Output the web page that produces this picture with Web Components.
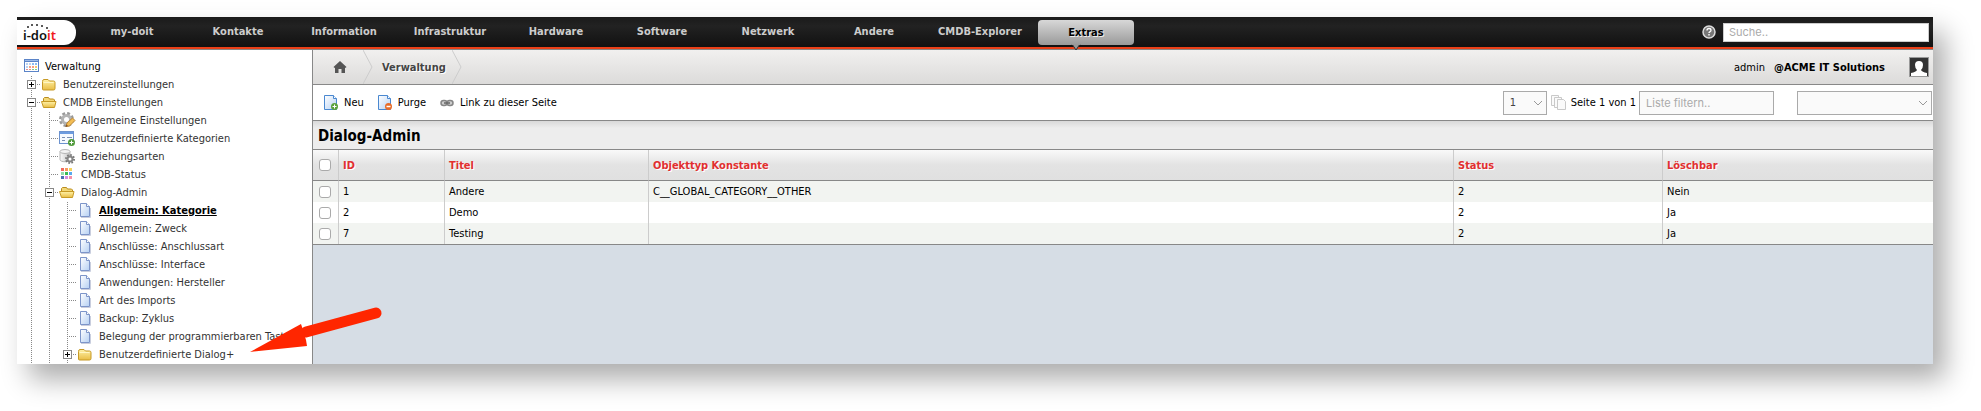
<!DOCTYPE html>
<html lang="de">
<head>
<meta charset="utf-8">
<title>i-doit – Dialog-Admin</title>
<style>
  body { margin: 0; padding: 17px 48px 47px 17px; background: #fff; color: #000;
    font: 11px/18px "DejaVu Sans Condensed", "DejaVu Sans", sans-serif; }
</style>
</head>
<body>
<app-shell>
  <top-bar slot="top">
    <nav-item>my-doit</nav-item>
    <nav-item>Kontakte</nav-item>
    <nav-item>Information</nav-item>
    <nav-item>Infrastruktur</nav-item>
    <nav-item>Hardware</nav-item>
    <nav-item>Software</nav-item>
    <nav-item>Netzwerk</nav-item>
    <nav-item>Andere</nav-item>
    <nav-item>CMDB-Explorer</nav-item>
    <nav-item active>Extras</nav-item>
  </top-bar>
  <tree-view slot="side">
    <tree-item level="0" icon="root">Verwaltung</tree-item>
    <tree-item level="1" icon="folder" toggle="plus">Benutzereinstellungen</tree-item>
    <tree-item level="1" icon="folder-open" toggle="minus">CMDB Einstellungen</tree-item>
    <tree-item level="2" icon="gear">Allgemeine Einstellungen</tree-item>
    <tree-item level="2" icon="form">Benutzerdefinierte Kategorien</tree-item>
    <tree-item level="2" icon="database">Beziehungsarten</tree-item>
    <tree-item level="2" icon="colors">CMDB-Status</tree-item>
    <tree-item level="2" icon="folder-open" toggle="minus">Dialog-Admin</tree-item>
    <tree-item level="3" icon="page" selected>Allgemein: Kategorie</tree-item>
    <tree-item level="3" icon="page">Allgemein: Zweck</tree-item>
    <tree-item level="3" icon="page">Anschlüsse: Anschlussart</tree-item>
    <tree-item level="3" icon="page">Anschlüsse: Interface</tree-item>
    <tree-item level="3" icon="page">Anwendungen: Hersteller</tree-item>
    <tree-item level="3" icon="page">Art des Imports</tree-item>
    <tree-item level="3" icon="page">Backup: Zyklus</tree-item>
    <tree-item level="3" icon="page">Belegung der programmierbaren Tasten</tree-item>
    <tree-item level="3" icon="folder" toggle="plus">Benutzerdefinierte Dialog+</tree-item>
  </tree-view>
  <crumb-bar>
    <span slot="trail">Verwaltung</span>
    <span slot="user">admin</span>
    <b slot="tenant">@ACME IT Solutions</b>
  </crumb-bar>
  <tool-bar></tool-bar>
  <list-title>Dialog-Admin</list-title>
  <data-list></data-list>
  <pointer-arrow slot="overlay"></pointer-arrow>
</app-shell>

<script>
const ICONS = {
  root: `<rect x="2" y="1" width="15" height="13" fill="#5b84c8"/><rect x="3" y="4" width="13" height="9" fill="#fff"/><path d="M3 2h13v1H3z" fill="#9dbbe8"/>
    <g fill="#bcd3f2"><path d="M4 5h2v2H4zM7 5h2v2H7zM4 8h2v2H4z"/></g><path d="M10 5h2v2h-2zM13 5h2v2h-2z" fill="#8cbcf0"/><path d="M7 8h2v2H7zM10 8h2v2h-2z" fill="#f6a183"/><path d="M13 8h2v2h-2z" fill="#f7c96a"/><path d="M4 11h2v1H4zM7 11h2v1H7z" fill="#e58c8c"/><path d="M10 11h2v1h-2zM13 11h2v1h-2z" fill="#7fce8f"/>`,
  folder: `<path d="M2.500 5.500q0-2 1.500-2h4l1.500 1.500h4q1.500 0 1.500 1.500v6q0 1.500-1.500 1.500h-10q-1 0-1-1z" fill="url(#y)" stroke="#c79a26"/><path d="M3.500 6.500h10" stroke="#fff6c4"/>`,
  "folder-open": `<path d="M3.500 12V4.500l1-1h4l1 1.500h4l1 1V8" fill="#f3d877" stroke="#b98c1f"/><path d="M1.500 7.500h14.500l-1.500 6h-11z" fill="url(#y)" stroke="#c79a26"/>`,
  page: `<path d="M4.500 1.500h6l3 3v10h-9z" fill="url(#b)" stroke="#7d95c9"/><path d="M10.500 1.500v3h3" fill="#fff" stroke="#7d95c9"/><path d="M5 15.500h9.500V6" fill="none" stroke="#c9cede"/>`,
  gear: `<circle cx="8.500" cy="7.500" r="6" fill="none" stroke="#999" stroke-width="3" stroke-dasharray="2.700 2"/><circle cx="8.500" cy="7.500" r="4" fill="#fff" stroke="#b4b4b4" stroke-width="3"/><path d="M8 14.500l1-3.500 5.500-5 2.500 2.500-5.500 5.500z" fill="#f3bd54" stroke="#b98535"/><path d="M7.500 15l1-2.500 1.500 1.500z" fill="#7b4b28"/>`,
  form: `<rect x="1.500" y="1.500" width="14" height="12" fill="#f6faff" stroke="#6c93cf"/><path d="M2 2h13v2H2z" fill="#6d9ce0"/><path d="M4 7.500h3M4 10.500h3M9 7.500h5" stroke="#7a8fb3"/><circle cx="13.500" cy="12.500" r="3.500" fill="#4f9a3a"/><path d="M11.500 12.500h4M13.500 10.500v4" stroke="#fff"/>`,
  database: `<path d="M2 3.500v8c0 3 10 3 10 0v-8" fill="url(#g)" stroke="#b5b5b5"/><ellipse cx="7" cy="3.500" rx="5" ry="2" fill="#f4f4f4" stroke="#b5b5b5"/><circle cx="12" cy="11" r="4" fill="none" stroke="#777" stroke-width="2" stroke-dasharray="1.600 1.500"/><circle cx="12" cy="11" r="2.500" fill="#fff" stroke="#858585" stroke-width="2"/>`,
  colors: `<path d="M3 2h3v3H3z" fill="#f26b5e"/><path d="M7 2h3v3H7z" fill="#f79b61"/><path d="M11 2h3v3h-3z" fill="#f4d35e"/><path d="M3 6h3v3H3z" fill="#98dcae"/><path d="M7 6h3v3H7z" fill="#3dbb54"/><path d="M11 6h3v3h-3z" fill="#57a8ee"/><path d="M3 10h3v3H3z" fill="#4b6fb3"/><path d="M7 10h3v3H7z" fill="#d78be0"/><path d="M11 10h3v3h-3z" fill="#f490a8"/>`,
  add: `<path d="M1.500 1.500h9l3 3v11h-12z" fill="url(#b)" stroke="#4a88d0"/><path d="M10.500 1.500v3h3" fill="#fff" stroke="#4a88d0"/><circle cx="11.500" cy="12.500" r="3.500" fill="#5aa13c"/><path d="M9.500 12.500h4M11.500 10.500v4" stroke="#fff"/>`,
  purge: `<path d="M1.500 1.500h9l3 3v11h-12z" fill="url(#b)" stroke="#4a88d0"/><path d="M10.500 1.500v3h3" fill="#fff" stroke="#4a88d0"/><circle cx="11.500" cy="12.500" r="3.500" fill="#e86a26"/><path d="M9.500 12.500h4" stroke="#fff" stroke-width="1.500"/>`,
  link: `<g fill="#ccc" stroke="#858585" stroke-width="1.500"><rect x="2" y="6.500" width="6" height="5" rx="2.500"/><rect x="8" y="6.500" width="6" height="5" rx="2.500"/></g><path d="M5 9h6" stroke="#666" stroke-width="1.500"/>`,
  copy: `<g fill="#fafafa" stroke="#c9c9c9"><path d="M1.500 1.500h7v10h-7z"/><path d="M4.500 3.500h7v10h-7z"/><path d="M7.500 5.500h6l2 2v8h-8z"/></g>`,
  home: `<path d="M9 3l6.500 6-1 1L14 9.500V15h-3.500v-4h-3v4H4V9.500L3.500 10l-1-1z" fill="#555"/>`,
  help: `<circle cx="9" cy="9" r="6" fill="#777" stroke="#ddd" stroke-width="1.500"/><path d="M7 7.500q0-2 2-2t2 1.800q0 1-1.200 1.500-.8.400-.8 1.200" fill="none" stroke="#fff" stroke-width="1.300"/><path d="M8.300 11h1.400v1.400H8.300z" fill="#fff"/>`
};
const GRADS = `<defs><linearGradient id="y" x2="0" y2="1"><stop stop-color="#fff2a8"/><stop offset="1" stop-color="#e9bd45"/></linearGradient><linearGradient id="b" x2="1" y2="1"><stop stop-color="#fff"/><stop offset="1" stop-color="#b5d0f3"/></linearGradient><linearGradient id="g"><stop stop-color="#fafafa"/><stop offset="1" stop-color="#c4c4c4"/></linearGradient></defs>`;

const define = (name, render) => customElements.define(name, class extends HTMLElement {
  connectedCallback() {
    if (this.shadowRoot) return;
    this.attachShadow({ mode: "open" }).innerHTML = render(this);
  }
});

define("ui-icon", el => `<style>:host{display:block;flex:none;width:18px;height:18px}svg{display:block}</style>
  <svg width="18" height="18" viewBox="0 0 18 18" aria-hidden="true">${GRADS}${ICONS[el.getAttribute("name")]}</svg>`);

define("app-shell", () => `<style>
  :host{display:block;position:relative;box-shadow:12px 15px 26px rgba(0,0,0,.33)}
  .body{display:flex;border-top:1px solid #888}
  main{flex:1;min-width:0;background:#d6dde5}
  </style>
  <slot name="top"></slot>
  <div class="body"><slot name="side"></slot><main><slot></slot></main></div>
  <slot name="overlay"></slot>`);

define("top-bar", () => `<style>
  :host{display:flex;align-items:center;height:30px;background:linear-gradient(#1a1a1a,#222 30%,#111);border-bottom:2px solid #ea3f17}
  .logo{display:block;position:relative;width:59px;height:25px;background:#fff;border-radius:0 12px 12px 0;
    font:600 13px/30px "Noto Sans",sans-serif;color:#111;text-decoration:none;box-sizing:border-box;padding-left:6px}
  .logo i{font-style:normal;color:#f01820}
  .logo svg{position:absolute;left:0;top:0}
  nav{display:flex;gap:10px;margin-left:8px;flex:1}
  ui-icon{margin-right:5px}
  input{box-sizing:border-box;width:206px;height:19px;margin:0 4px 0 0;padding:0 5px;border:1px solid #ccc;background:#fff;font:11px Inter,sans-serif}
  input::placeholder{color:#aaa;opacity:1}
  </style>
  <a class="logo" href="#" aria-label="i-doit">i-do<i>it</i><svg width="40" height="10" aria-hidden="true"><g fill="#222"><circle cx="11" cy="7" r="1"/><circle cx="15" cy="5" r="1"/><circle cx="20" cy="5" r="1"/><circle cx="25" cy="6" r="1"/><circle cx="30" cy="8" r="1"/></g></svg></a>
  <nav><slot></slot></nav>
  <ui-icon name="help"></ui-icon>
  <input type="search" placeholder="Suche.." aria-label="Suche">`);

define("nav-item", () => `<style>
  :host{display:block;position:relative;width:96px}
  a{display:block;height:25px;line-height:24px;text-align:center;font-weight:bold;color:#ccc;text-decoration:none;border-radius:4px}
  svg{display:none;position:absolute;left:32px;top:24px}
  :host([active]) a{color:#000;line-height:26px;background:linear-gradient(#d8d8d8,#999);text-shadow:1px 1px 0 #eee}
  :host([active]) svg{display:block}
  </style><a href="#"><slot></slot></a>
  <svg width="12" height="8" aria-hidden="true"><path d="M2 0h8L6 6z" fill="#999" stroke="#333"/><path d="M2 0h8" stroke="#999" stroke-width="2"/></svg>`);

define("tree-view", () => `<style>
  :host{display:block;flex:none;box-sizing:border-box;width:296px;padding:8px 0 0 5px;background:#fff;border-right:1px solid #888;overflow:hidden}
  </style><slot></slot>`);

define("tree-item", el => {
  const level = +el.getAttribute("level"), toggle = el.getAttribute("toggle");
  let cells = "";
  for (let i = 1; i <= level; i++) cells += i < level ? `<span class="cell"></span>`
    : `<span class="cell join">${toggle ? `<button type="button" aria-label="${toggle === "plus" ? "Öffnen" : "Schließen"}"><svg width="9" height="9"><path d="M2 4.500h5${toggle === "plus" ? "M4.500 2v5" : ""}" stroke="#000"/></svg></button>` : ""}</span>`;
  return `<style>
  :host{display:flex;height:18px;white-space:nowrap}
  .cell{flex:none;display:flex;align-items:center;justify-content:center;width:18px;height:18px;
    background:repeating-linear-gradient(#888 0 1px,transparent 1px 2px) 9px 0/1px 18px no-repeat}
  .join{background:repeating-linear-gradient(#888 0 1px,transparent 1px 2px) 9px 0/1px 18px no-repeat,
    repeating-linear-gradient(90deg,#888 0 1px,transparent 1px 2px) 9px 8px/9px 1px no-repeat}
  button{box-sizing:border-box;width:9px;height:9px;margin:0 0 1px 1px;padding:0;border:0;outline:1px solid #888;outline-offset:-1px;background:#fff}
  button svg{display:block}
  a{margin-left:5px;color:#333;text-decoration:none}
  :host([level="0"]) a,:host([selected]) a{color:#000}
  :host([selected]) a{font-weight:bold;text-decoration:underline}
  </style>${cells}<ui-icon name="${el.getAttribute("icon")}"></ui-icon><a href="#"><slot></slot></a>`;
});

define("crumb-bar", () => `<style>
  :host{display:flex;align-items:center;height:34px;background:linear-gradient(#f1f0ef,#dcdbda);border-bottom:1px solid #888}
  .home{margin-left:18px}
  .sep{flex:none;display:block}
  .home + .sep{margin-left:14px}
  .trail{margin:0 6px 0 9px;padding-top:2px;font-weight:bold;color:#444;text-decoration:none;text-shadow:1px 1px 0 #fff}
  .who{display:flex;gap:9px;margin:0 24px 0 auto;padding-top:2px}
  .avatar{flex:none;margin-right:4px}
  </style>
  <a class="home" href="#" aria-label="Startseite"><ui-icon name="home"></ui-icon></a>
  <svg class="sep" width="10" height="34" aria-hidden="true"><path d="M0 0l9 17-9 17" fill="none" stroke="#ccc"/></svg>
  <a class="trail" href="#"><slot name="trail"></slot></a>
  <svg class="sep" width="10" height="34" aria-hidden="true"><path d="M0 0l9 17-9 17" fill="none" stroke="#ccc"/></svg>
  <div class="who"><slot name="user"></slot><slot name="tenant"></slot></div>
  <svg class="avatar" width="20" height="20" aria-hidden="true"><rect x=".5" y=".5" width="19" height="19" fill="#333" stroke="#999"/><path d="M2 19v-3q5-1 6-3-2-2-2-5 0-4 4-4t4 4q0 3-2 5 1 2 6 3v3z" fill="#fff"/></svg>`);

define("tool-bar", () => `<style>
  :host{display:flex;align-items:center;height:35px;background:#fff;border-bottom:1px solid #888}
  button{display:flex;align-items:center;gap:3px;margin:0;padding:0;border:0;background:none;font:inherit;color:inherit}
  .actions{display:flex;gap:13px;margin-left:10px;flex:1}
  .pager{display:flex;align-items:center;gap:3px}
  select,input{box-sizing:border-box;height:24px;margin:0;border:1px solid #aaa;border-radius:0;background-color:#fafafa;color:#444}
  input{width:135px;padding:0 6px;font:11px Inter,sans-serif}
  input::placeholder{color:#aaa;opacity:1}
  .pick{display:grid}
  .pick > *{grid-area:1/1}
  .pick svg{align-self:center;justify-self:end;margin-right:4px;pointer-events:none}
  select{appearance:none;padding:0 6px;font:inherit;width:44px}
  .wide select{width:135px}
  .wide{margin:0 1px 0 20px}
  </style>
  <div class="actions">
    <button type="button"><ui-icon name="add"></ui-icon>Neu</button>
    <button type="button"><ui-icon name="purge"></ui-icon>Purge</button>
    <button type="button"><ui-icon name="link"></ui-icon>Link zu dieser Seite</button>
  </div>
  <div class="pager">
    <span class="pick"><select aria-label="Seite"><option>1</option></select><svg width="10" height="6"><path d="M1 1l4 4 4-4" fill="none" stroke="#999"/></svg></span>
    <ui-icon name="copy"></ui-icon><span>Seite 1 von 1</span>
    <input type="text" placeholder="Liste filtern.." aria-label="Liste filtern">
    <span class="pick wide"><select aria-label="Filterspalte"><option></option></select><svg width="10" height="6"><path d="M1 1l4 4 4-4" fill="none" stroke="#999"/></svg></span>
  </div>`);

define("list-title", () => `<style>
  :host{display:block;border-bottom:1px solid #888;background:linear-gradient(#d9d9d9,#ededed 7px)}
  h1{margin:0;padding:2px 0 0 5px;font-size:15px;line-height:26px}
  </style><h1><slot></slot></h1>`);

define("data-list", () => {
  const rows = [["1", "Andere", "C__GLOBAL_CATEGORY__OTHER", "2", "Nein"], ["2", "Demo", "", "2", "Ja"], ["7", "Testing", "", "2", "Ja"]];
  return `<style>
  :host{display:block;border-bottom:1px solid #888}
  table{width:100%;border-collapse:separate;border-spacing:0;table-layout:fixed}
  th,td{padding:0 4px;text-align:left;border-right:1px solid #ccc}
  th:last-child,td:last-child{border-right:0}
  th{height:28px;padding-top:2px;color:#e22f2f;text-shadow:1px 1px 0 #fff;border-bottom:1px solid #888;background:linear-gradient(#f9f9f9,#e3e3e3 50%,#e0e0e0)}
  td{height:21px;line-height:21px;background:#fff}
  tbody tr:nth-child(odd) td{background:#f2f4f1}
  th:first-child,td:first-child{padding:0 6px}
  th:first-child{height:30px}
  input{appearance:none;display:block;box-sizing:border-box;width:12px;height:12px;margin:0;border:1px solid #aaa;border-radius:3px;background:#fff}
  .c{width:26px}.id{width:106px}.t{width:204px}.s{width:209px}.l{width:270px}
  </style><table><colgroup><col class="c"><col class="id"><col class="t"><col><col class="s"><col class="l"></colgroup>
  <thead><tr><th><input type="checkbox" aria-label="Alle auswählen"></th><th>ID</th><th>Titel</th><th>Objekttyp Konstante</th><th>Status</th><th>Löschbar</th></tr></thead>
  <tbody>${rows.map(r => `<tr><td><input type="checkbox" aria-label="${r[1]} auswählen"></td>${r.map(c => `<td>${c}</td>`).join("")}</tr>`).join("")}</tbody></table>`;
});

define("pointer-arrow", () => `<style>:host{display:block;position:absolute;left:232px;bottom:9px;pointer-events:none}svg{display:block}</style>
  <svg width="134" height="50" aria-hidden="true"><path d="M57 27L127 8" stroke="#ff2600" stroke-width="11" stroke-linecap="round"/><path d="M1 47L52 19l2 6 3 10 1 6z" fill="#ff2600"/></svg>`);
</script>
</body>
</html>
